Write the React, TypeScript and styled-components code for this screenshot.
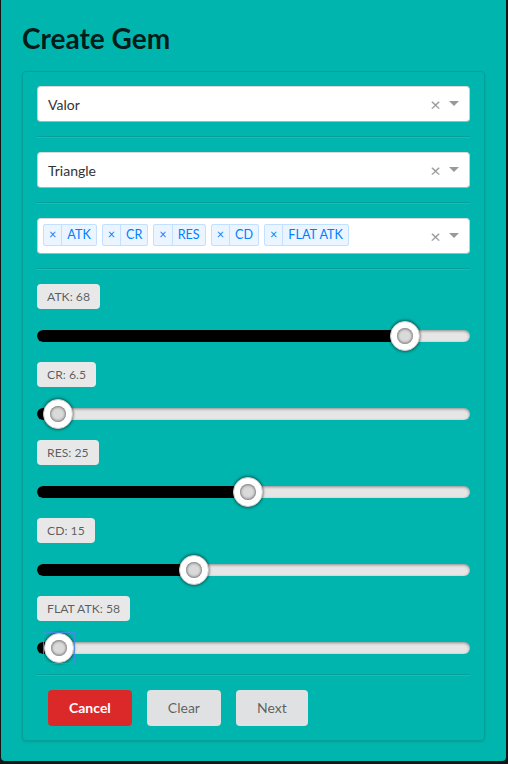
import styled, { createGlobalStyle } from "styled-components";

interface StatSlider {
  name: string;
  value: string;
  percent: number;
  focused?: boolean;
}

const stats: StatSlider[] = [
  { name: "ATK", value: "68", percent: 85 },
  { name: "CR", value: "6.5", percent: 4.9 },
  { name: "RES", value: "25", percent: 48.7 },
  { name: "CD", value: "15", percent: 36.3 },
  { name: "FLAT ATK", value: "58", percent: 5.1, focused: true },
];

const tags = ["ATK", "CR", "RES", "CD", "FLAT ATK"];

const GlobalStyle = createGlobalStyle`
  html, body {
    margin: 0;
    padding: 0;
    background: #141515;
  }
  body {
    font-family: Lato, "Helvetica Neue", Arial, sans-serif;
    font-size: 14px;
  }
  * {
    box-sizing: border-box;
  }
`;

const Modal = styled.div`
  margin-left: 1px;
  width: 505px;
  height: 761px;
  background: #00b5ad;
  border-radius: 0 0 4px 4px;
  padding: 20px 21px;
  display: flex;
  flex-direction: column;
`;

const Title = styled.h1`
  margin: 0 0 15px;
  font-size: 28px;
  line-height: 36px;
  font-weight: 700;
  color: rgba(0, 0, 0, 0.87);
`;

const Segment = styled.div`
  border: 1px solid rgba(34, 36, 38, 0.15);
  border-radius: 4px;
  box-shadow: 0 1px 2px 0 rgba(34, 36, 38, 0.15);
  padding: 14px;
  display: flex;
  flex-direction: column;
`;

const Divider = styled.div<{ $top?: number }>`
  margin: ${(p) => p.$top ?? 14}px 0 14px;
  border-top: 1px solid rgba(34, 36, 38, 0.15);
  border-bottom: 1px solid rgba(255, 255, 255, 0.1);
`;

const Control = styled.div`
  display: flex;
  align-items: center;
  height: 36px;
  background: #fff;
  border: 1px solid #ccc;
  border-color: #d9d9d9 #ccc #b3b3b3;
  border-radius: 4px;
`;

const SingleValue = styled.div`
  flex: 1;
  padding-left: 10px;
  color: #333;
  font-size: 14px;
`;

const MultiValue = styled.div`
  flex: 1;
  align-self: stretch;
  display: flex;
  align-items: flex-start;
`;

const Tag = styled.div`
  display: flex;
  height: 22px;
  margin: 5px 0 0 5px;
  background: #ebf5ff;
  border: 1px solid #c2e0ff;
  border-radius: 2px;
  color: #007eff;
  font-size: 12.6px;
  line-height: 20px;
`;

const TagIcon = styled.span`
  padding: 0 5px;
  border-right: 1px solid #c2e0ff;
`;

const TagLabel = styled.span`
  padding: 0 5px;
`;

const ClearZone = styled.span`
  width: 17px;
  text-align: center;
  color: #999;
  font-size: 18px;
  line-height: 1;
`;

const ArrowZone = styled.span`
  width: 25px;
  padding-right: 5px;
  display: flex;
  justify-content: center;
`;

const Arrow = styled.span`
  width: 0;
  height: 0;
  border-style: solid;
  border-width: 5px 5px 2.5px;
  border-color: #999 transparent transparent;
`;

const SliderList = styled.div`
  display: flex;
  flex-direction: column;
  gap: 20px;
`;

const SliderField = styled.div`
  display: flex;
  flex-direction: column;
  align-items: flex-start;
`;

const ValueLabel = styled.div`
  background: #e8e8e8;
  color: rgba(0, 0, 0, 0.62);
  font-size: 12.2px;
  font-weight: 400;
  line-height: 13px;
  padding: 6px 10px;
  border-radius: 4px;
`;

const Track = styled.div`
  position: relative;
  align-self: stretch;
  height: 12px;
  margin-top: 21px;
  border-radius: 10px;
  background: #e6e6e6;
  box-shadow: inset 0 1px 3px rgba(0, 0, 0, 0.4);
`;

const Fill = styled.div`
  position: absolute;
  left: 0;
  top: 0;
  height: 100%;
  border-radius: 10px;
  background: #000;
`;

const Handle = styled.div<{ $focused?: boolean }>`
  position: absolute;
  top: 50%;
  width: 30px;
  height: 30px;
  transform: translate(-50%, -50%);
  outline: ${(p) => (p.$focused ? "1px solid rgba(70, 140, 230, 0.85)" : "none")};
  outline-offset: 0;
`;

const Knob = styled.div`
  width: 30px;
  height: 30px;
  border-radius: 50%;
  background: #fff;
  border: 1px solid #ccc;
  box-shadow: 0 1px 3px rgba(0, 0, 0, 0.4), 0 -1px 3px rgba(0, 0, 0, 0.4);
  display: flex;
  align-items: center;
  justify-content: center;
`;

const Dot = styled.div`
  width: 16px;
  height: 16px;
  border-radius: 50%;
  background: #dadada;
  box-shadow: inset 0 1px 3px rgba(0, 0, 0, 0.4), inset 0 -1px 3px rgba(0, 0, 0, 0.4);
`;

const Actions = styled.div`
  display: flex;
  gap: 15px;
  padding-left: 11px;
`;

const Button = styled.button<{ $variant?: "red" }>`
  font-family: inherit;
  font-size: 14px;
  line-height: 1;
  padding: 11px 21px;
  border: 0;
  border-radius: 4px;
  cursor: pointer;
  background: ${(p) => (p.$variant === "red" ? "#db2828" : "#e0e1e2")};
  color: ${(p) => (p.$variant === "red" ? "#fff" : "rgba(0, 0, 0, 0.6)")};
  font-weight: ${(p) => (p.$variant === "red" ? 700 : 400)};
`;

const Indicators = () => (
  <>
    <ClearZone>×</ClearZone>
    <ArrowZone>
      <Arrow />
    </ArrowZone>
  </>
);

const App = () => {
  return (
    <>
      <GlobalStyle />
      <Modal>
        <Title>Create Gem</Title>
        <Segment>
          <Control>
            <SingleValue>Valor</SingleValue>
            <Indicators />
          </Control>
          <Divider />
          <Control>
            <SingleValue>Triangle</SingleValue>
            <Indicators />
          </Control>
          <Divider />
          <Control>
            <MultiValue>
              {tags.map((t) => (
                <Tag key={t}>
                  <TagIcon>×</TagIcon>
                  <TagLabel>{t}</TagLabel>
                </Tag>
              ))}
            </MultiValue>
            <Indicators />
          </Control>
          <Divider />
          <SliderList>
            {stats.map((s) => (
              <SliderField key={s.name}>
                <ValueLabel>
                  {s.name}: {s.value}
                </ValueLabel>
                <Track>
                  <Fill style={{ width: `${s.percent}%` }} />
                  <Handle $focused={s.focused} style={{ left: `${s.percent}%` }}>
                    <Knob>
                      <Dot />
                    </Knob>
                  </Handle>
                </Track>
              </SliderField>
            ))}
          </SliderList>
          <Divider $top={20} />
          <Actions>
            <Button $variant="red">Cancel</Button>
            <Button>Clear</Button>
            <Button>Next</Button>
          </Actions>
        </Segment>
      </Modal>
    </>
  );
};

export default App;
